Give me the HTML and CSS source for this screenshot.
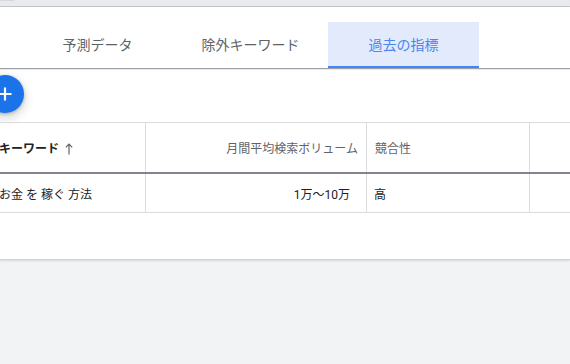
FILE: index.html
```html
<!DOCTYPE html>
<html lang="ja">
<head>
<meta charset="utf-8">
<link rel="stylesheet" href="styles.css">
</head>
<body>
<div class="topbar"><span class="topbar-nub"></span></div>
<div class="card">
  <div class="tabs">
    <div class="tab">予測データ</div>
    <div class="tab">除外キーワード</div>
    <div class="tab active">過去の指標</div>
  </div>
  <div class="toolbar">
    <button class="fab" aria-label="追加">
      <svg width="16" height="16" viewBox="0 0 16 16"><path d="M8 1.5v13M1.5 8h13" stroke="#fff" stroke-width="2.2" fill="none"/></svg>
    </button>
  </div>
  <div class="grid">
    <div class="row head">
      <div class="cell c1 strong">キーワード<svg class="sort" width="8" height="12" viewBox="0 0 8 12"><path d="M4 11.5V1.2M0.8 4.4L4 1.2l3.2 3.2" stroke="#5f6368" stroke-width="1.2" fill="none"/></svg></div>
      <div class="cell c2">月間平均検索ボリューム</div>
      <div class="cell c3">競合性</div>
      <div class="cell c4"></div>
    </div>
    <div class="row data">
      <div class="cell c1">お金 を 稼ぐ 方法</div>
      <div class="cell c2 num">1万～10万</div>
      <div class="cell c3 val">高</div>
      <div class="cell c4"></div>
    </div>
  </div>
</div>
</body>
</html>
```
FILE: styles.css
```css
html, body {
  margin: 0;
  padding: 0;
}
body {
  width: 570px;
  height: 364px;
  overflow: hidden;
  background: #f1f3f4;
  font-family: Roboto, "Noto Sans CJK JP", sans-serif;
}
.topbar {
  height: 6px;
  background: #e8eaed;
  border-bottom: 1px solid #c4c6ca;
  display: flex;
}
.topbar-nub {
  width: 14px;
  height: 1px;
  background: #d6d8db;
}
.card {
  height: 252px;
  background: #fff;
  border-bottom: 1px solid #cfd1d4;
  box-shadow: 0 1px 2px rgba(60, 64, 67, 0.15);
  overflow: hidden;
}
.tabs {
  display: flex;
  gap: 2px;
  padding: 15px 0 0 22px;
  border-bottom: 1px solid #9aa0a6;
  box-shadow: 0 1px 1px rgba(0, 0, 0, 0.08);
}
.tab {
  width: 151px;
  height: 44px;
  border-bottom: 2px solid transparent;
  display: flex;
  align-items: center;
  justify-content: center;
  font-size: 14px;
  color: #5f6368;
}
.tab.active {
  background: #e2eafc;
  color: #4a86ee;
  border-bottom-color: #4285f4;
}
.toolbar {
  height: 53px;
  margin-left: -14px;
  padding-top: 6px;
  box-sizing: border-box;
}
.fab {
  width: 38px;
  height: 38px;
  border: none;
  border-radius: 50%;
  background: #1a73e8;
  padding: 0;
  display: flex;
  align-items: center;
  justify-content: center;
  box-shadow: 0 1px 3px rgba(60, 64, 67, 0.35), 0 4px 8px 2px rgba(60, 64, 67, 0.18);
}
.grid {
  margin-left: -24px;
  border-top: 1px solid #dadce0;
}
.row {
  display: grid;
  grid-template-columns: 170px 221px 163px 1fr;
}
.head {
  height: 51px;
  border-bottom: 2px solid #80868b;
  box-sizing: border-box;
}
.data {
  height: 39px;
  border-bottom: 1px solid #dadce0;
  box-sizing: border-box;
}
.cell {
  display: flex;
  align-items: center;
  font-size: 12px;
  color: #202124;
  border-right: 1px solid #dadce0;
  box-sizing: border-box;
}
.head .cell {
  color: #5f6368;
}
.head .cell.strong {
  color: #202124;
  font-weight: bold;
}
.c1 {
  padding-left: 23px;
}
.c2 {
  justify-content: flex-end;
  padding-right: 8px;
}
.c2.num {
  padding-right: 16px;
}
.c3 {
  padding-left: 8px;
}
.c3.val {
  padding-left: 7px;
}
.c4 {
  border-right: none;
}
.sort {
  margin-left: 6px;
  margin-top: 2px;
}
```
